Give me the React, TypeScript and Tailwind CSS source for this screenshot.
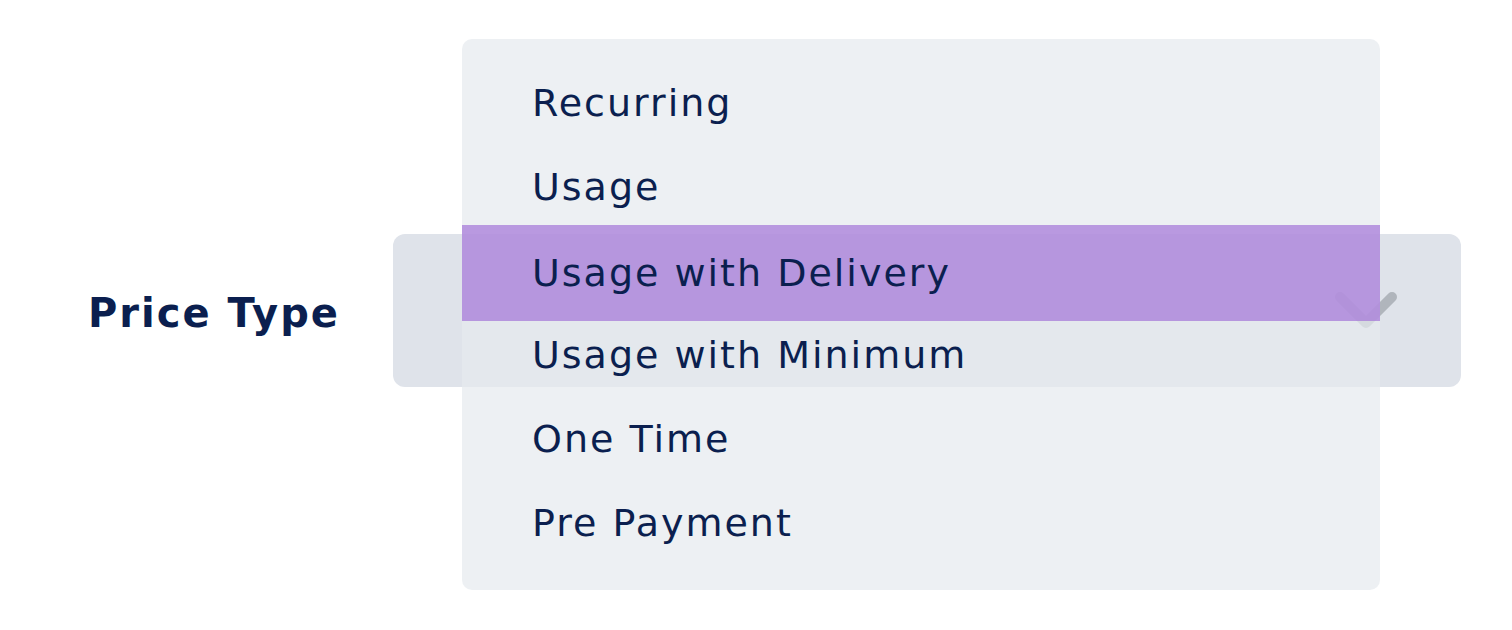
const items = [
  "Recurring",
  "Usage",
  "Usage with Delivery",
  "Usage with Minimum",
  "One Time",
  "Pre Payment",
];

export default function App() {
  const selected = 2;
  return (
    <div
      className="relative h-[630px] w-full bg-white flex items-center pl-[88px] pb-[9px] text-[#0b1f4f]"
      style={{ fontFamily: '"DejaVu Sans", "Open Sans", sans-serif' }}
    >
      <div className="w-[305px] mt-[5px] text-[40px] font-bold tracking-[2px]">Price Type</div>

      {/* select */}
      <div className="relative w-[1068px] h-[153px] rounded-[12px] bg-[#dfe3ea]">
        <svg
          className="absolute right-[60px] top-[50px]"
          width="70"
          height="56"
          viewBox="0 0 70 56"
          fill="none"
        >
          <polyline
            points="9,13 35,39 61,13"
            stroke="#b0b5bc"
            strokeWidth="10"
            strokeLinecap="round"
            strokeLinejoin="round"
          />
        </svg>

        {/* open menu */}
        <div className="absolute left-[69px] top-[-195px] w-[918px] rounded-[10px] bg-[rgba(229,233,238,0.7)] pt-[22px] pb-[25px] z-10">
          {items.map((label, i) => (
            <div
              key={label}
              className={
                i === selected
                  ? "h-[96px] -mt-[4px] -mb-[8px] flex items-center pl-[70px] text-[38px] tracking-[2px] bg-[rgba(163,115,215,0.7)]"
                  : "h-[84px] flex items-center pl-[70px] text-[38px] tracking-[2px]"
              }
            >
              {label}
            </div>
          ))}
        </div>
      </div>
    </div>
  );
}
